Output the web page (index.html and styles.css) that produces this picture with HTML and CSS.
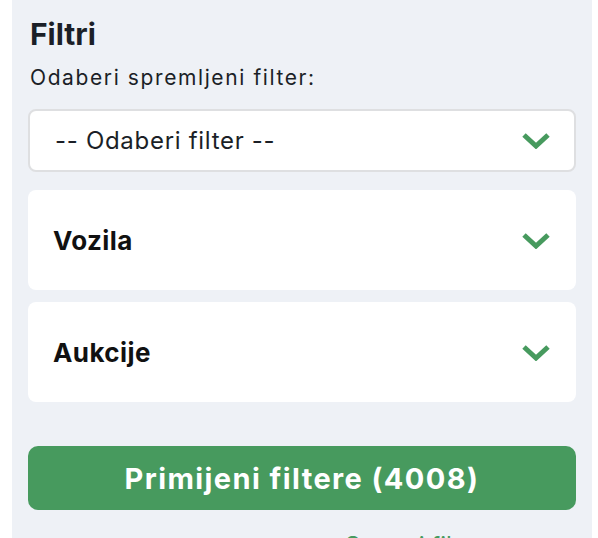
FILE: index.html
```html
<!DOCTYPE html>
<html lang="hr">
<head>
<meta charset="utf-8">
<title>Filtri</title>
<link rel="stylesheet" href="styles.css">
</head>
<body>
<aside class="panel">
  <h2 class="title">Filtri</h2>
  <label class="label">Odaberi spremljeni filter:</label>
  <div class="select">
    <span class="select-text">-- Odaberi filter --</span>
    <svg class="chev" viewBox="0 0 30 17" width="30" height="17"><polyline points="3,3 15,14 27,3" fill="none" stroke="#479a5e" stroke-width="5"/></svg>
  </div>
  <div class="card">
    <span class="card-title">Vozila</span>
    <svg class="chev" viewBox="0 0 30 17" width="30" height="17"><polyline points="3,3 15,14 27,3" fill="none" stroke="#479a5e" stroke-width="5"/></svg>
  </div>
  <div class="card">
    <span class="card-title">Aukcije</span>
    <svg class="chev" viewBox="0 0 30 17" width="30" height="17"><polyline points="3,3 15,14 27,3" fill="none" stroke="#479a5e" stroke-width="5"/></svg>
  </div>
  <button class="apply">Primijeni filtere (4008)</button>
  <div class="save-row"><a class="save">Spremi filter</a></div>
</aside>
</body>
</html>
```
FILE: styles.css
```css
html, body {
  margin: 0;
  padding: 0;
  background: #ffffff;
}
body {
  font-family: Inter, "Liberation Sans", sans-serif;
  color: #1b1f27;
}
.panel {
  margin-left: 12px;
  width: 580px;
  box-sizing: border-box;
  background: #eef1f6;
  padding: 16px 16px 40px;
  display: flex;
  flex-direction: column;
}
.title {
  margin: 0;
  font-size: 30px;
  line-height: 36px;
  font-weight: 700;
  padding-left: 2px;
}
.label {
  margin-top: 14px;
  font-size: 21px;
  line-height: 24px;
  letter-spacing: 1.6px;
  padding-left: 2px;
}
.select {
  margin-top: 19px;
  height: 63px;
  box-sizing: border-box;
  background: #fff;
  border: 2px solid #dedfe1;
  border-radius: 8px;
  display: flex;
  align-items: center;
  justify-content: space-between;
  padding: 0 23px 0 25px;
}
.select-text {
  font-size: 24px;
  letter-spacing: 0.7px;
}
.card {
  margin-top: 18px;
  height: 100px;
  background: #fff;
  border-radius: 8px;
  display: flex;
  align-items: center;
  justify-content: space-between;
  padding: 0 25px;
}
.card + .card {
  margin-top: 12px;
}
.card-title {
  font-size: 26px;
  font-weight: 700;
  letter-spacing: 0.4px;
  color: #111;
}
.chev {
  display: block;
}
.apply {
  margin-top: 44px;
  height: 64px;
  border: none;
  border-radius: 10px;
  background: #479a5e;
  color: #fff;
  font-family: inherit;
  font-size: 29px;
  font-weight: 700;
  letter-spacing: 1.4px;
}
.save-row {
  padding-left: 317px;
  margin-top: 21px;
}
.save {
  color: #479a5e;
  font-size: 24px;
  line-height: 30px;
}
```
